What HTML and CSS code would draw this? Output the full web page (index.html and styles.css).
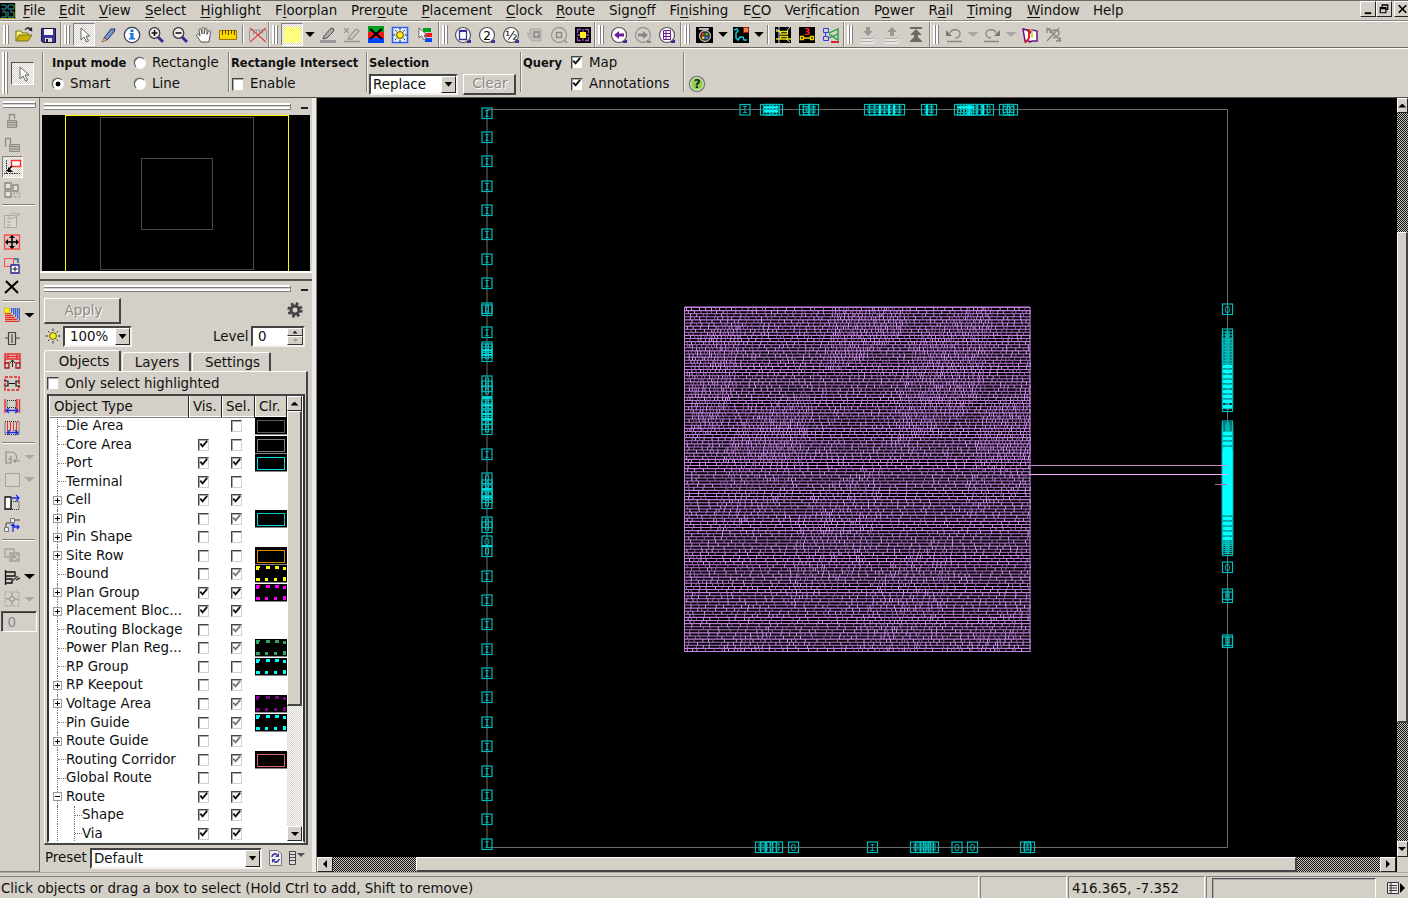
FILE: index.html
```html
<!DOCTYPE html>
<html lang="en">
<head>
<meta charset="utf-8">
<title>Layout Window</title>
<link rel="stylesheet" href="styles.css">
</head>
<body>
<svg class="defs" width="0" height="0">
  <symbol id="logo" viewBox="0 0 16 16"><path fill="#000" d="M0 0h16v16H0z"/><path fill="none" stroke="#20a090" d="M1 2h5v4H1M8 2h6v4H8zM2 9h4v5H1M8 8v6h6V9h-4"/><path stroke="#7040b0" d="M6 4h3M4 6v3M11 6v3"/><path stroke="#c0b040" d="M0 15.500h15.500V0" fill="none"/></symbol>
  <symbol id="open" viewBox="0 0 20 20"><path fill="#fff27a" stroke="#777020" d="M2 16V6h5l1 2h6v3"/><path fill="#c8b400" stroke="#777020" d="M2 16l3-6h13l-4 6z"/><path fill="none" stroke="#222" stroke-width="1.300" d="M11 5c2-3 5-3 6 0M14.500 4.500l3 1 0-3"/></symbol>
  <symbol id="save" viewBox="0 0 20 20"><path fill="#39339a" stroke="#151238" d="M3.500 3.500h14v14H5l-1.500-1.500z"/><path fill="#f4f4f4" d="M6 4h9v6H6z"/><path fill="#ddd" d="M7 13h7v4H7z"/><path fill="#222" d="M8 14h2v3H8z"/></symbol>
  <symbol id="pointer" viewBox="0 0 20 20"><path fill="#fff" stroke="#666" d="M7 3v12l3-3 2.500 5 2-1-2.500-5h4z"/></symbol>
  <symbol id="pencil" viewBox="0 0 20 20"><path fill="#7c96cc" stroke="#223060" d="M6 13L13 4h4l-1 3-7 8z"/><path fill="#f3d795" stroke="#6b4b20" stroke-width=".7" d="M4 17l2-4 3 2z"/></symbol>
  <symbol id="info" viewBox="0 0 20 20"><circle cx="10" cy="10" r="7.700" fill="#fff" stroke="#335" stroke-width="1.200"/><path fill="#1674e0" d="M8.500 4.500h3v2.500h-3zM7.500 8h4v5h1.500v1.500h-6V13h1.500V9.500h-1z"/></symbol>
  <symbol id="lens" viewBox="0 0 20 20"><path stroke="#3a2e98" stroke-width="3" d="M12 12l5 5"/><circle cx="8.500" cy="8" r="5.300" fill="#eee" stroke="#333" stroke-width="1.200"/></symbol>
  <symbol id="zoomin" viewBox="0 0 20 20"><use href="#lens"/><path stroke="#111" stroke-width="1.600" d="M5.500 8h6M8.500 5v6"/></symbol>
  <symbol id="zoomout" viewBox="0 0 20 20"><use href="#lens"/><path stroke="#111" stroke-width="1.600" d="M5.500 8h6"/></symbol>
  <symbol id="hand" viewBox="0 0 20 20"><path fill="#fff" stroke="#555" d="M7 17L2.500 10.500c0-2 2-1.500 3.500.5L5 5c0-2 2-1.500 2.300 0L8 9V3.500c.3-1.600 2-1.500 2.300 0V9L11 4c.5-1.500 2-1 2 .5L13 9.500l1.500-3.500c1-1 2.200-.4 2 1L15 17z"/></symbol>
  <symbol id="ruler" viewBox="0 0 20 20"><path fill="#f8d800" stroke="#9a7800" d="M1.500 5.500h17v9h-17z"/><path stroke="#604000" d="M4.500 5v5M7.500 5v4M10.500 5v5M13.500 5v4M16.500 5v5"/></symbol>
  <symbol id="rulerx" viewBox="0 0 20 20"><path fill="none" stroke="#999" d="M1.500 15V5h17v10M5.500 5v5M8.500 5v4M11.500 5v5M14.500 5v4"/><path stroke="#e04040" stroke-width="1.200" d="M2 3l16 14M18 3L2 17"/></symbol>
  <symbol id="yellow" viewBox="0 0 20 20"><path fill="#ffff7d" d="M2 2h17v16H2z"/></symbol>
  <symbol id="marker" viewBox="0 0 20 20"><path fill="#aaa" stroke="#555" d="M6 11l7-8 3 1-1 3-6 6-4 1z"/><path fill="#999" d="M2 15h16v3H2z"/></symbol>
  <symbol id="markerx" viewBox="0 0 20 20"><path fill="none" stroke="#999" stroke-width="1.300" d="M2 3l5 5M7 3L2 8M7 12l7-8 3 2-7 8H6zM2 16.500h16"/></symbol>
  <symbol id="clearhl" viewBox="0 0 20 20"><path fill="#00a020" d="M2 1h16v6H2z"/><path fill="#f01818" d="M2 7h16v6H2z"/><path fill="#0048ff" d="M2 13h16v5H2z"/><path stroke="#000" stroke-width="2.200" d="M4 4l12 10M16 4L4 14"/></symbol>
  <symbol id="sunbox" viewBox="0 0 20 20"><path fill="#e8ecff" stroke="#2a60ff" stroke-width="1.600" d="M2.500 2.500h15v15h-15z"/><use href="#sun"/></symbol>
  <symbol id="sun" viewBox="0 0 20 20"><path stroke="#333" d="M10 2.500v15M2.500 10h15M5 5l10 10M15 5L5 15"/><circle cx="10" cy="10" r="5" fill="#dcd9d2"/><circle cx="10" cy="10" r="3.400" fill="#ffee20" stroke="#665500"/></symbol>
  <symbol id="selcolor" viewBox="0 0 20 20"><path fill="#00a020" d="M9 3h8v4H9z"/><path fill="#f01818" d="M10 8h8v4h-8z"/><path fill="#0048ff" d="M11 13h7v4h-7z"/><path fill="#fff" stroke="#666" d="M5 3v10l2.500-2.500L10 15l2-1-2-4h3z"/></symbol>
  <symbol id="bigl" viewBox="0 0 20 20"><path fill="#3a2e98" d="M13 14l5 1v3h-4z"/><circle cx="10" cy="10" r="7.500" fill="#fff" stroke="#555" stroke-width="1.200"/></symbol>
  <symbol id="fit" viewBox="0 0 20 20"><use href="#bigl"/><path fill="#fff" stroke="#38309a" stroke-width="1.300" d="M6.500 5.500h7v9h-7z"/><path fill="#38309a" d="M6 5h8v2H6z"/></symbol>
  <symbol id="two" viewBox="0 0 20 20"><use href="#bigl"/><text x="6.300" y="14.500" font-size="12" font-family="DejaVu Sans">2</text></symbol>
  <symbol id="half" viewBox="0 0 20 20"><use href="#bigl"/><text x="4" y="15" font-size="13" font-family="DejaVu Sans">½</text></symbol>
  <symbol id="panoff" viewBox="0 0 20 20"><path fill="#c4c0b8" stroke="#aaa" d="M4 12l-2-4 3 1V4h11v12H7z"/><path fill="none" stroke="#888" stroke-width="1.500" d="M9 7h5v5H9z"/></symbol>
  <symbol id="fitoff" viewBox="0 0 20 20"><circle cx="10" cy="10" r="7.500" fill="#d4d0c8" stroke="#999" stroke-width="1.300"/><path fill="none" stroke="#888" stroke-width="1.500" d="M7.500 7.500h5v5h-5z"/><path stroke="#999" stroke-width="2" d="M15 15l3 3"/></symbol>
  <symbol id="chipsel" viewBox="0 0 20 20"><path fill="#000" d="M2 2h16v16H2z"/><path fill="none" stroke="#9b50c0" stroke-width="1.300" d="M4.500 8V4.500H8M12 4.500h3.500V8M15.500 12v3.500H12M8 15.500H4.500V12M10 4v12M4 10h12"/><path fill="#ffee20" d="M7 7h6v6H7z"/></symbol>
  <symbol id="prev" viewBox="0 0 20 20"><use href="#bigl"/><path fill="#6a1b9a" d="M5 10l5-4v2.500h5v3h-5V14z"/></symbol>
  <symbol id="next" viewBox="0 0 20 20"><circle cx="10" cy="10" r="7.500" fill="#d4d0c8" stroke="#999" stroke-width="1.300"/><path fill="#888" d="M15 10l-5-4v2.500H5v3h5V14zM14 15l4 1v2h-4z"/></symbol>
  <symbol id="viewlist" viewBox="0 0 20 20"><use href="#bigl"/><path fill="#fff" stroke="#6a1b9a" d="M6.500 5.500h7v9h-7zM6 8.500h8M6 11.500h8M9 5v10"/></symbol>
  <symbol id="camera" viewBox="0 0 20 20"><path fill="#000" d="M1 2h17v16H1z"/><circle cx="10" cy="11" r="5.500" fill="#333" stroke="#bbb" stroke-width="1.300"/><path fill="#bbb" d="M4 3h10v2H4z"/><path fill="#f03020" d="M7 8h2.500v2.500H7z"/><path fill="#30c040" d="M10.500 8H13v2.500h-2.500z"/><path fill="#fc0" d="M7 11.500h2.500V14H7z"/><path fill="#28f" d="M10.500 11.500H13V14h-2.500z"/></symbol>
  <symbol id="route" viewBox="0 0 20 20"><path fill="#000" d="M2 2h16v16H2z"/><path fill="none" stroke="#18c8d8" stroke-width="1.500" d="M3 5l3-1 1 2-2 2v5l2 2 2-3h3l1 3h3"/><path fill="#f08040" stroke="#902010" d="M12.500 2.500h5v5h-5z"/></symbol>
  <symbol id="flyline" viewBox="0 0 20 20"><path fill="#000" d="M2 2h16v16H2z"/><path fill="none" stroke="#e8e000" stroke-width="1.300" d="M7.500 6.500h7v2.500h-7zM7.500 11.500h7v2.500h-7zM3 6h4M15 14h3M3 14h4"/><path stroke="#ddd" d="M6 2v16M3 4l5 4M13 7l4-5M13 14l4 3"/></symbol>
  <symbol id="pin3" viewBox="0 0 20 20"><path fill="#000" d="M2 2h16v16H2z"/><text x="7" y="10" font-size="9" font-weight="bold" fill="#f02020" font-family="DejaVu Sans">3</text><path fill="none" stroke="#e8d000" stroke-width="1.400" d="M3.500 11.500h3v3h-3zM13.500 11.500h3v3h-3zM7 13h6"/></symbol>
  <symbol id="hier" viewBox="0 0 20 20"><path fill="none" stroke="#3838e8" d="M2.500 3.500h5v4h-5zM2.500 11.500h5v4h-5zM4.500 8v3"/><path fill="none" stroke="#18a038" stroke-width="1.300" d="M8 8l9-4v11L8 9M8 13l9-4"/><path fill="#e02020" d="M10 16h8v2h-8z"/></symbol>
  <symbol id="pushd" viewBox="0 0 20 20"><path fill="none" stroke="#fff" d="M3 15h12l3-4M3 18h12l3-4"/><path fill="none" stroke="#aaa" d="M3 13.500h12l3-4M3 16.500h12l3-4"/><path fill="#999" d="M8 2h4v4h3l-5 5-5-5h3z"/></symbol>
  <symbol id="pushu" viewBox="0 0 20 20"><path fill="none" stroke="#fff" d="M3 15h12l3-4M3 18h12l3-4"/><path fill="none" stroke="#aaa" d="M3 13.500h12l3-4M3 16.500h12l3-4"/><path fill="#999" d="M8 11h4V7h3l-5-5-5 5h3z"/></symbol>
  <symbol id="top" viewBox="0 0 20 20"><path fill="#6c6a66" d="M4 2h12v2H4zM10 4l6 6H4zM10 10l6 6H4zM4 16h12v1H4zM8 8h4v9H8z"/></symbol>
  <symbol id="undo" viewBox="0 0 20 20"><path fill="none" stroke="#8a8882" stroke-width="1.400" d="M6 8c1-5 11-4 10 1-.5 3-3 4-5 4M3 16.500h15"/><path fill="#777" d="M2 5v6h6z"/></symbol>
  <symbol id="redo" viewBox="0 0 20 20"><path fill="none" stroke="#8a8882" stroke-width="1.400" d="M14 8C13 3 3 4 4 9c.5 3 3 4 5 4M2 16.500h15"/><path fill="#777" d="M18 5v6h-6z"/></symbol>
  <symbol id="book" viewBox="0 0 20 20"><path fill="#fff" stroke="#6a1080" stroke-width="1.500" d="M3 4l4 1 3 3 2-3 5 1v10h-5l-2 1-1-1H5z"/><path fill="none" stroke="#e02020" stroke-width="2" d="M9 4v9l-4 5"/><path stroke="#f0c000" stroke-width="1.500" d="M12 5v8"/></symbol>
  <symbol id="bookx" viewBox="0 0 20 20"><path fill="none" stroke="#8a8882" stroke-width="1.400" d="M3 3l14 13M15 3L3 16M3 8V4h4M6 8c2-4 9-4 9 0s-4 4-6 5M12 16h4v-4"/></symbol>
  <symbol id="help" viewBox="0 0 20 20"><circle cx="10" cy="10" r="7.500" fill="#8ed050" stroke="#777" stroke-width="1.500"/><circle cx="10" cy="10" r="6.300" fill="none" stroke="#e4f4d4"/><text x="6.800" y="14.300" font-size="12" font-weight="bold" font-family="DejaVu Sans" fill="#222">?</text></symbol>

  <symbol id="lock" viewBox="0 0 20 20"><path fill="none" stroke="#908e88" stroke-width="1.300" d="M7.500 10V3.500h5V8"/><path fill="#bbb8b0" stroke="#908e88" d="M5.500 9.500h9v7h-9zM5 11.500h11M5 14h11"/></symbol>
  <symbol id="unlock" viewBox="0 0 20 20"><path fill="none" stroke="#908e88" stroke-width="1.300" d="M3.500 12V3.500h5V9"/><path fill="#bbb8b0" stroke="#908e88" d="M7.500 9.500h10v7h-10zM7 11.500h11M7 14h11"/></symbol>
  <symbol id="snap" viewBox="0 0 20 20"><path fill="#fff" stroke="#ff3030" stroke-width="1.500" d="M9.500 3.500h9v6h-9z"/><path stroke="#222" stroke-dasharray="1.500 1" d="M4.500 3v15M2 16.500h16"/><path stroke="#000" stroke-width="1.500" d="M5 14l5-5"/><path d="M6 10v5h5z"/></symbol>
  <symbol id="blocks" viewBox="0 0 20 20"><path fill="#e4e2dc" stroke="#888680" stroke-width="1.300" d="M3 3h6v6H3zM11 5h5v6h-5zM3 11h6v6H3z"/><path fill="none" stroke="#888680" stroke-dasharray="1 1" d="M12 13h6v4h-6z"/></symbol>
  <symbol id="props" viewBox="0 0 20 20"><path fill="#d9d7d0" stroke="#aaa8a2" d="M2.500 5.500h12v12h-12zM5 12h4M5 15h4M5 9l6-6 7 1-6 4z"/></symbol>
  <symbol id="move" viewBox="0 0 20 20"><path fill="#ddbfba" stroke="#ff4a4a" stroke-width="1.300" d="M2.500 3h15v14h-15z"/><path stroke="#000" stroke-width="1.500" d="M10 5v10M5 10h10"/><path d="M10 3l3 3H7zM10 17l3-3H7zM3 10l3-3v6zM17 10l-3-3v6z"/></symbol>
  <symbol id="copy" viewBox="0 0 20 20"><path fill="none" stroke="#ff4a4a" d="M2.500 3.500h9v8h-9z"/><path fill="#fff" stroke="#202090" stroke-width="1.300" d="M9 10h8v8H9z"/><path stroke="#111" d="M13 11.500v5M10.500 14h5"/><path fill="none" stroke="#306090" stroke-width="1.500" d="M12 4h4v4"/></symbol>
  <symbol id="del" viewBox="0 0 20 20"><path stroke="#000" stroke-width="2" d="M4 4l12 12M16 4L3 16"/></symbol>
  <symbol id="hatch" viewBox="0 0 20 20"><path fill="#9aa6d0" d="M8 3h10v14z"/><path fill="#e89a88" d="M3 8h5l10 9H3z"/><path stroke="#3860d0" d="M9.500 3v5M11.500 3v7M13.500 3v9M15.500 3v11M17.500 3v13"/><path stroke="#e03020" d="M3 8.500h6M3 10.500h8M3 12.500h10M3 14.500h12M3 16.500h14"/><path fill="#ffee00" stroke="#c0b000" stroke-width=".6" d="M2.500 3h5v5h-5z"/></symbol>
  <symbol id="stretch" viewBox="0 0 20 20"><path fill="none" stroke="#444" stroke-width="1.200" d="M6.500 4.500h7v12h-7zM10 6v9M3 10h4M13 10h5"/></symbol>
  <symbol id="redA" viewBox="0 0 20 20"><path fill="none" stroke="#e83030" stroke-width="1.500" d="M3 3h15v5H3zM3 8v5M18 8v5M6 3v5M15 3v5M3 5.500h15"/><path fill="#d4d0c8" stroke="#a01818" stroke-width="1.300" d="M3 12h4v5H3zM14 12h4v5h-4z"/><path fill="none" stroke="#222" d="M10.500 16V9M8 12l2.500-3 2.500 3"/></symbol>
  <symbol id="redB" viewBox="0 0 20 20"><path fill="none" stroke="#e81818" stroke-width="1.500" stroke-dasharray="3 1.500" d="M3 4h14v13H3z"/><path fill="none" stroke="#111" stroke-width="1.200" d="M2 8h4v5H2M18 8h-4v5h4M7 10.500h6"/></symbol>
  <symbol id="redC" viewBox="0 0 20 20"><path stroke="#e83030" stroke-width="1.400" d="M3 3v14M15 3v14M17.500 3v14"/><path fill="none" stroke="#222" stroke-dasharray="1 1" d="M5 4.500h9v7H5z"/><path fill="none" stroke="#2030e0" stroke-width="1.300" d="M4 14.500h12M7 12l-3 2.500L7 17M13 12l3 2.500-3 2.500"/></symbol>
  <symbol id="redD" viewBox="0 0 20 20"><path fill="none" stroke="#222" stroke-dasharray="1 1" d="M3 3.500h14v13H3z"/><path stroke="#e83030" d="M5.500 4v9M8.500 4v9M11.500 4v9M14.500 4v9"/><path fill="none" stroke="#2030e0" stroke-width="1.300" d="M5 14.500h11M8 12l-3 2.500L8 17M13 12l3 2.500-3 2.500"/></symbol>
  <symbol id="rot" viewBox="0 0 20 20"><path fill="none" stroke="#908e88" stroke-width="1.200" d="M4 16V5h5c5 0 6 3 6 8M3 16h6V9M6 12h3M11 14h7M13 12v4"/></symbol>
  <symbol id="sq" viewBox="0 0 20 20"><path fill="#d8d4cc" stroke="#a4a29c" d="M3.500 3.500h14v13h-14z"/></symbol>
  <symbol id="expand" viewBox="0 0 20 20"><path fill="#fff" stroke="#111" stroke-width="1.300" d="M3 4h6v12H3z"/><path fill="none" stroke="#222" stroke-dasharray="1 1" d="M9 8.500h8v8H9z"/><path fill="none" stroke="#2030e0" stroke-width="1.300" d="M10 5h7M14 2l3 3-3 3"/></symbol>
  <symbol id="conn" viewBox="0 0 20 20"><path fill="#eee" stroke="#777" d="M2.500 12.500h4v4h-4zM8.500 3.500h4v4h-4z"/><path fill="none" stroke="#444" d="M4 12V8h5M13 5h5"/><path fill="none" stroke="#2030e0" stroke-width="1.300" d="M11 17V9M9 11l2-2 2 2M11 12h6M15 10l2 2-2 2"/></symbol>
  <symbol id="overlap" viewBox="0 0 20 20"><path fill="none" stroke="#a4a29c" stroke-width="1.300" d="M3 4h9v8H3zM8 8h9v8H8zM8 8l9 8M17 8l-9 8"/></symbol>
  <symbol id="align" viewBox="0 0 20 20"><path fill="none" stroke="#111" stroke-width="1.300" d="M3.500 3v15M4 5h9v4H4M4 12h6v4H4"/><path fill="none" stroke="#444" stroke-width="1.500" d="M10 14l6-5M14 13l4-2"/></symbol>
  <symbol id="spread" viewBox="0 0 20 20"><path fill="none" stroke="#999690" stroke-dasharray="2 1.500" d="M3 3h14v14H3z"/><path fill="#ddd" stroke="#888" d="M8 8h4v4H8zM10 4v3M10 13v3M4 10h3M13 10h3"/></symbol>
  <symbol id="gear" viewBox="0 0 20 20"><circle cx="10" cy="10" r="6.200" fill="none" stroke="#444" stroke-width="3" stroke-dasharray="2.600 2.270"/><circle cx="10" cy="10" r="4" fill="none" stroke="#444" stroke-width="3"/></symbol>
  <symbol id="reload" viewBox="0 0 20 20"><path fill="#eee" stroke="#777" d="M4.500 2.500h8l4 3v12h-12z"/><path fill="none" stroke="#483a98" stroke-width="1.600" d="M7 9c0-3 4-4 5-2M14 11c0 3-4 4-5 2"/><path fill="#483a98" d="M14 5v4h-4zM7 15v-4h4z"/></symbol>
  <symbol id="listmenu" viewBox="0 0 20 20"><path fill="#ddd" stroke="#444" d="M2.500 3.500h6v13h-6zM3 6.500h5M3 9.500h5M3 12.500h5"/><path fill="#555" d="M10 5h8l-4 4z"/></symbol>
  <symbol id="panelout" viewBox="0 0 20 20"><path fill="#eee" stroke="#333" d="M1.500 4.500h11v11h-11zM3 7.500h8M3 10h8M3 12.500h8M5 5v10"/><path d="M14 5v10l5-5z"/></symbol>
  <symbol id="tick" viewBox="0 0 12 12"><path fill="none" stroke="currentColor" stroke-width="2" d="M2.500 5l2.500 3 5-6"/></symbol>
</svg>

<div class="app">
  <nav class="menubar">
    <svg class="logo"><use href="#logo"/></svg>
    <span><u>F</u>ile</span><span><u>E</u>dit</span><span><u>V</u>iew</span><span><u>S</u>elect</span><span><u>H</u>ighlight</span><span>F<u>l</u>oorplan</span><span>Prer<u>o</u>ute</span><span><u>P</u>lacement</span><span><u>C</u>lock</span><span><u>R</u>oute</span><span>Sign<u>o</u>ff</span><span>Fi<u>n</u>ishing</span><span>E<u>C</u>O</span><span>Ver<u>i</u>fication</span><span>P<u>o</u>wer</span><span>R<u>a</u>il</span><span><u>T</u>iming</span><span><u>W</u>indow</span><span>Help</span>
    <div class="winbtns">
      <svg class="winbtn" viewBox="0 0 15 15"><path d="M4 11h7v2H4z"/></svg>
      <svg class="winbtn" viewBox="0 0 15 15"><path fill="none" stroke="#000" stroke-width="1.300" d="M5.500 5V3h6v5h-2M3.500 6h6v5.500h-6zM3.500 7h6M5.500 3.500h6"/></svg>
      <svg class="winbtn last" viewBox="0 0 15 15"><path stroke="#000" stroke-width="1.800" d="M3.500 3.500l8 8M11.500 3.500l-8 8"/></svg>
    </div>
  </nav>

  <div class="toolbar" id="toolbar"></div>

  <div class="options">
    <i class="grip tall"></i>
    <span class="modebtn pressed"><svg><use href="#pointer"/></svg></span>
    <div class="opt mode">
      <b>Input mode</b><label><i class="radio"></i>Rectangle</label>
      <label><i class="radio on"></i>Smart</label><label><i class="radio"></i>Line</label>
    </div>
    <div class="opt rect"><b>Rectangle Intersect</b><label><i class="check big"></i>Enable</label></div>
    <div class="opt sel"><b>Selection</b>
      <div class="line"><div class="combo replace"><span>Replace</span><i class="drop"></i></div><button class="btn clear">Clear</button></div>
    </div>
    <div class="opt query"><b>Query</b><label><i class="check big"><svg><use href="#tick"/></svg></i>Map</label><span></span><label><i class="check big"><svg><use href="#tick"/></svg></i>Annotations</label></div>
    <div class="opt helpbox"><span></span><svg><use href="#help"/></svg></div>
  </div>

  <div class="main">
    <aside class="strip" id="strip"><i class="hgrip"></i></aside>
    <section class="dock">
      <div class="dockhead"><i class="hgrip"></i><i class="min"></i></div>
      <svg class="overview" viewBox="0 0 268 156" shape-rendering="crispEdges"><path fill="none" stroke="#484848" d="M58.500 2.500h153v152h-153zM99.500 43.500h71v71h-71z"/><path fill="#ffff00" d="M23 0h224v1H23zM246 0h1v156h-1zM23 0h1v156h-1z"/></svg>
      <div class="split"></div>
      <div class="dockhead second"><i class="hgrip"></i><i class="min"></i></div>
      <div class="applyrow"><button class="btn apply">Apply</button><svg><use href="#gear"/></svg></div>
      <div class="levelrow">
        <svg><use href="#sun"/></svg>
        <div class="combo pct"><span>100%</span><i class="drop"></i></div>
        <span class="lvl">Level</span>
        <div class="combo spin"><span>0</span><span class="spins"><i class="up"></i><i class="dn"></i></span></div>
      </div>
      <div class="tabs"><span class="tab on">Objects</span><span class="tab">Layers</span><span class="tab">Settings</span></div>
      <div class="panel">
        <label class="only"><i class="check big"></i>Only select highlighted</label>
        <div class="tree">
          <div class="treemain">
            <div class="thead"><span>Object Type</span><span>Vis.</span><span>Sel.</span><span>Clr.</span></div>
            <div class="rows" id="objectRows"></div>
          </div>
          <div class="vscroll"><i class="sb up"></i><i class="thumb"></i><i class="space"></i><i class="sb down"></i></div>
        </div>
      </div>
      <div class="preset"><span>Preset</span><div class="combo def"><span>Default</span><i class="drop"></i></div><svg><use href="#reload"/></svg><svg><use href="#listmenu"/></svg></div>
    </section>
    <section class="view">
      <svg id="layout" class="layout" viewBox="317 98 1079 759"></svg>
      <div class="vbar"><i class="sb up"></i><i class="a"></i><i class="thumb"></i><i class="b"></i><i class="sb down"></i></div>
      <div class="hbar"><i class="sb left"></i><i class="a"></i><i class="thumb"></i><i class="b"></i><i class="sb right"></i></div>
      <div class="corner"></div>
    </section>
  </div>

  <footer class="status">
    <span class="cell msg">Click objects or drag a box to select (Hold Ctrl to add, Shift to remove)</span>
    <span class="cell"></span>
    <span class="cell">416.365, -7.352</span>
    <span class="cell last"><i class="progress"></i><svg><use href="#panelout"/></svg></span>
  </footer>
</div>
<script src="app.js"></script>
</body>
</html>
```

FILE: styles.css
```css
* { box-sizing: border-box; }
body { margin: 0; background: #d4d0c8; color: #101010; font: 13.4px/18px "DejaVu Sans", sans-serif; overflow: hidden; white-space: nowrap; }
i { display: block; font-style: normal; flex: none; }
u { text-decoration: underline; text-underline-offset: 2px; }
svg { display: block; width: 20px; height: 20px; flex: none; }
.defs { display: none; }
.app { width: 1408px; height: 898px; display: grid; grid-template-rows: 21px 27px 50px 774px 26px; background: #d4d0c8; }

.menubar { display: grid; grid-template-columns: 23px 36px 40px 46px 55.500px 74.500px 76px 70.500px 84.500px 50px 53px 60.500px 73.500px 41.500px 89.500px 54.500px 38.500px 60px 66px 267px 48px; border-top: 1px solid #6c6a66; border-bottom: 1px solid #86847e; line-height: 19px; height: 21px; }
.logo { width: 16px; height: 16px; margin-top: 2px; }
.winbtns { display: flex; }
.winbtn { width: 16px; height: 16px; border: 1px solid #fff; border-right: 1px solid #222; border-bottom: 1px solid #222; background: #d4d0c8; }
.winbtn.last { margin-left: 2px; border-right: 0; }

.toolbar { display: flex; border-top: 1px solid #fff; border-bottom: 1px solid #6c6a66; height: 27px; }
.group { display: flex; align-items: center; border-right: 1px solid #86847e; box-shadow: 1px 0 #f4f2ee; height: 25px; }
.group:last-child { border: 0; box-shadow: none; }
.grip { width: 5px; height: 19px; border-left: 2px solid #fff; border-right: 2px solid #fff; box-shadow: 1px 0 #808080, inset 1px 0 #808080; margin-left: 3px; margin-right: 4px; }
.grip.tall { height: 42px; margin-left: 2px; }
.tool { width: 24px; height: 24px; display: flex; align-items: center; justify-content: center; flex: none; }
.tool.narrow { width: 22px; height: 23px; margin-right: 1px; }
.pressed { border: 1px solid #808080; border-right-color: #fff; border-bottom-color: #fff; background: repeating-conic-gradient(#fff 0 25%, #d4d0c8 0 50%) 0 0 / 2px 2px; }
.dd { width: 12px; height: 5px; background: #000; clip-path: polygon(10% 0, 90% 0, 50% 100%); }
.dd.wide { width: 14px; }
.dd.off { background: #aaa8a4; }
.vsep { width: 2px; height: 19px; border-left: 1px solid #808080; border-right: 1px solid #fff; margin: 0 2px; }

.options { display: flex; border-top: 1px solid #fff; border-bottom: 1px solid #55534e; height: 50px; padding-top: 3px; }
.modebtn { width: 23px; height: 23px; margin: 10px 8px 0 0; display: flex; align-items: center; justify-content: center; border-color: #555 #fff #fff #555; }
.opt { display: grid; grid-template-rows: 21.500px 21.500px; align-items: center; height: 40px; border-left: 1px solid #808080; box-shadow: inset 1px 0 #eee; }
.opt label { display: flex; align-items: center; }
.opt b { font-size: 11.500px; }
.mode { width: 186px; grid-template-columns: 82px 1fr; padding-left: 9px; }
.rect { width: 138px; padding-left: 2px; }
.rect label { padding-left: 1px; }
.sel { width: 154px; padding-left: 2px; }
.query { width: 163px; grid-template-columns: 48px 1fr; padding-left: 2px; }
.helpbox { padding-left: 3px; }
.options .grip.tall { margin-right: 4px; }
.radio { width: 12px; height: 12px; border-radius: 50%; background: #fff; border: 1px solid #555; border-right-color: #f8f8f8; border-bottom-color: #f8f8f8; margin-right: 6px; box-shadow: -1px -1px 0 -0.500px #999; }
.radio.on { background: radial-gradient(#000 0 2.200px, #fff 2.700px); }
.check { width: 11px; height: 12px; background: #fff; border: 1px solid #444; border-right-color: #d4d0c8; border-bottom-color: #d4d0c8; box-shadow: inset 1px 1px #aaa; }
.check svg { width: 11px; height: 11px; margin: -1px 0 0 -1px; }
.check.big { width: 12px; height: 13px; margin-right: 6px; }
.line { display: flex; align-items: center; }
.combo { display: flex; background: #fff; border: 2px solid #333; border-color: #444 #f4f2ee #f4f2ee #444; height: 21px; line-height: 17px; }
.combo > span:first-child { flex: 1; padding-left: 3px; }
.drop { width: 15px; height: 17px; background: #d4d0c8; border: 1px solid #fff; border-right-color: #222; border-bottom-color: #222; display: flex; align-items: center; justify-content: center; }
.drop::before { content: ""; width: 8px; height: 5px; background: #000; clip-path: polygon(0 0, 100% 0, 50% 100%); }
.replace { width: 89px; margin-right: 5px; }
.replace > span:first-child { padding-left: 2px; }
.btn { font: inherit; color: #8c8a86; text-shadow: 1px 1px #fff; background: #d4d0c8; border: 1px solid #fff; border-right: 2px solid #444; border-bottom: 2px solid #444; padding: 0; }
.clear { width: 53px; height: 21px; line-height: 17px; padding-left: 2px; }

.main { display: grid; grid-template-columns: 40px 277px 1091px; height: 774px; }
.strip { border-right: 1px solid #6c6a66; border-bottom: 1px solid #808080; display: flex; flex-direction: column; padding-left: 1.500px; }
.hgrip { height: 6px; border-top: 2px solid #fff; border-bottom: 2px solid #fff; box-shadow: 0 1px #808080, inset 0 1px #808080, 1px 1px #808080; }
.strip .hgrip { width: 32px; margin: 3px 0 2px 1px; flex: none; }
.srow { display: flex; align-items: center; flex: none; }
.srow .pressed { margin-top: -1px; }
.srow .tool { width: 21px; height: 22px; }
.srow .dd { width: 14px; }
.hsep { height: 2px; width: 33px; border-top: 1px solid #808080; border-bottom: 1px solid #fff; flex: none; }
.zero { width: 36px; height: 21px; border: 1px solid #555; border-right-color: #fff; border-bottom-color: #fff; box-shadow: inset 1px 1px #333; color: #888; padding: 2px 0 0 6px; margin: 1px 0 0 -1px; flex: none; }

.dock { display: flex; flex-direction: column; padding-left: 2px; border-right: 1px solid #86847e; box-shadow: inset -4px 0 #efede8; }
.dockhead { height: 17px; display: flex; padding: 5px 0 0 2px; flex: none; }
.dockhead .hgrip { width: 246px; }
.min { width: 7px; height: 2px; background: #222; margin: 4px 0 0 11px; }
.overview { width: 268px; height: 156px; background: #000; }
.split { height: 10px; border-bottom: 2px solid #55534e; border-top: 2px solid #fff; margin-right: 4px; margin-left: -2px; flex: none; }
.dockhead.second { height: 17px; padding-top: 4px; }
.applyrow { display: flex; justify-content: space-between; padding: 0 11px 0 2px; height: 29px; align-items: flex-start; flex: none; }
.apply { width: 77px; height: 26px; padding-left: 3px; }
.applyrow svg { width: 20px; height: 20px; margin: 2px 0 0; }
.levelrow { display: flex; height: 23px; flex: none; align-items: flex-start; line-height: 20px; }
.levelrow svg { margin: -1px -1px 0 1px; }
.levelrow .combo { margin-top: -1px; line-height: 18px; }
.pct { width: 69px; margin-left: 1px; }
.pct > span:first-child { padding-left: 5px; }
.lvl { margin: 0 4px 0 81px; width: 34px; }
.spin { width: 54px; }
.spin > span:first-child { padding-left: 5px; }
.spins { width: 16px; background: #d4d0c8; display: grid; grid-template-rows: 8px 9px; }
.spins i { border: 1px solid #fff; border-right-color: #333; border-bottom-color: #333; display: flex; align-items: center; justify-content: center; }
.spins i::before { content: ""; width: 5px; height: 3px; background: #222; clip-path: polygon(50% 0, 100% 100%, 0 100%); }
.spins .dn::before { background: #999; transform: rotate(180deg); }
.tabs { display: flex; height: 21px; align-items: flex-end; padding-left: 2px; flex: none; }
.tab { height: 19px; line-height: 19px; border-top: 1px solid #fff; border-left: 1px solid #fff; border-right: 2px solid #444; border-radius: 3px 2px 0 0; width: 69px; margin-left: 1px; text-align: center; padding-left: 2px; }
.tab.on { width: 77px; height: 21px; margin-left: 0; line-height: 21px; padding-left: 4px; }
.tab:last-child { width: 79px; padding-left: 3px; }
.panel { width: 264px; margin: 0 9px 0 2px; border-top: 1px solid #fff; border-left: 1px solid #fff; border-right: 2px solid #444; border-bottom: 2px solid #444; height: 474px; padding: 1px 1px 0 2px; flex: none; }
.only { display: flex; align-items: center; height: 21px; }
.tree { display: grid; grid-template-columns: 238px 15px; height: 449px; width: 258px; border: 2px solid #222; border-color: #444 #333 #fff #333; background: #fff; }
.treemain { height: 445px; overflow: hidden; width: 238px; }
.thead { display: grid; grid-template-columns: 140px 33px 33px 32px; height: 20px; background: #d4d0c8; margin-bottom: 1px; }
.thead span { border-left: 1px solid #fff; border-right: 1px solid #222; border-bottom: 1px solid #808080; padding-left: 3px; line-height: 21px; }
.thead span:first-child { padding-left: 4px; }
.rows { overflow: hidden; }
.row { height: 18.520px; display: grid; grid-template-columns: 9px 8px 132px 33px 24px 32px; align-items: center; line-height: 18px; }
.row .vis { grid-column: 4; }
.row .selc { grid-column: 5; }
.row .sw { grid-column: 6; }
.row .gray { color: #777; }
.guide { align-self: stretch; border-right: 1px dotted #777; }
.twig { border-top: 1px dotted #777; height: 1px; }
.box { width: 9px; height: 9px; margin-left: -5px; background: #fff; border: 1px solid #999; display: grid; place-items: center; position: relative; z-index: 1; }
.box::before { content: ""; width: 5px; height: 1px; background: #000; grid-area: 1/1; }
.box.plus::after { content: ""; width: 1px; height: 5px; background: #000; grid-area: 1/1; }
.row.child { grid-template-columns: 9px 17px 7px 116px 33px 24px 32px; }
.row.child .vis { grid-column: 5; }
.row.child .selc { grid-column: 6; }
.swatch { width: 32px; height: 18px; background: #000; padding: 3px 2px 1px; border-bottom: 1px solid #888; }
.swatch b { display: block; height: 13px; width: 28px; border: 1px solid; }
.swatch.dots { padding: 0 1px; }
.swatch svg { width: 30px; height: 17px; }
.vscroll { display: grid; grid-template-rows: 15px 295px 1fr 15px; height: 445px; }
.sb { background: #d4d0c8; border: 1px solid #fff; border-right: 1px solid #222; border-bottom: 1px solid #222; display: flex; align-items: center; justify-content: center; }
.sb::before { content: ""; width: 8px; height: 4px; background: #000; clip-path: polygon(50% 0, 100% 100%, 0 100%); }
.sb.down::before { transform: rotate(180deg); }
.sb.left::before { transform: rotate(-90deg); }
.sb.right::before { transform: rotate(90deg); }
.thumb { background: #d4d0c8; border: 1px solid #fff; border-right: 2px solid #444; border-bottom: 2px solid #444; }
.space { background: repeating-conic-gradient(#fff 0 25%, #d4d0c8 0 50%) 0 0 / 2px 2px; }
.preset { display: flex; align-items: center; height: 24px; padding: 2px 0 0 3px; flex: none; }
.preset > span { width: 45px; }
.def { width: 172px; }
.def > span:first-child { padding-left: 2px; }
.preset svg { margin-left: 2px; width: 20px; }
.preset .combo + svg { margin-left: 3px; }

.view { display: grid; grid-template-columns: 1079.500px 11.500px; grid-template-rows: 758.500px 15.500px; background: #000; height: 774px; }
.layout { width: 1079px; height: 759px; background: #000; }
.vbar { display: grid; grid-template-rows: 15px 119px 491px 118px 15.500px; }
.hbar { display: grid; grid-template-columns: 16px 83px 881px 83px 16px; }
.view .a, .view .b { background: repeating-conic-gradient(#c8c4bc 0 25%, #101010 0 50%) 0 0 / 2px 2px; }
.corner { background: #d4d0c8; }

.status { display: grid; grid-template-columns: 979px 87px 137px 205px; padding-top: 3px; border-top: 1px solid #aaa8a2; gap: 1px; }
.cell { height: 22px; line-height: 23px; border: 1px solid #808080; border-right: 1px solid #fff; border-bottom: 0; padding-left: 3px; }
.cell.msg { border-left: 0; padding-left: 1px; }
.cell.last { display: flex; padding-left: 5px; }
.progress { width: 164px; height: 20px; border: 1px solid #555; border-right-color: #fff; border-bottom: 0; margin-top: 1px; box-shadow: inset 1px 1px #aaa; }
.cell.last svg { margin: 1px 0 0 10px; }
.port { fill: none; stroke: #00bcbc; stroke-width: 1.2; }
.tight { fill: none; stroke: #00b8b8; }
.pname { fill: #00b8b8; font: 10px "Liberation Mono", monospace; text-anchor: middle; }
```

FILE: app.js
```javascript
const icon = id => `<svg><use href="#${id}"/></svg>`;
const tool = id => `<span class="tool">${icon(id)}</span>`;

// Main toolbar: each group is [width, ...items]
const groups = [
  [61, 'open', 'save'],
  [208, '!pointer', 'pencil', 'info', 'zoomin', 'zoomout', 'hand', 'ruler', '|', 'rulerx'],
  [170, '!yellow', 'v', 'marker', 'markerx', 'clearhl', 'sunbox', 'selcolor'],
  [156, 'fit', 'two', 'half', 'panoff', 'fitoff', 'chipsel'],
  [86, 'prev', 'next', 'viewlist'],
  [163, 'camera', 'v', 'route', 'v', '|', 'flyline', 'pin3', 'hier'],
  [86, 'pushd', 'pushu', 'top'],
  [478, 'undo', 'x', 'redo', 'x', 'book', 'bookx']
];
document.getElementById('toolbar').innerHTML = groups.map(([w, ...items]) =>
  `<div class="group" style="width:${w}px"><i class="grip"></i>` + items.map(t =>
    t === '|' ? '<i class="vsep"></i>' :
    t === 'v' ? '<i class="dd"></i>' :
    t === 'x' ? '<i class="dd wide off"></i>' :
    t[0] === '!' ? `<span class="tool narrow pressed">${icon(t.slice(1))}</span>` : tool(t)).join('') + '</div>').join('');

// Edit strip: [height, icon, pressed/dropdown flag]
const strip = [
  [24, 'lock'], [23, 'unlock'], [23, 'snap', 'p'], [22, 'blocks'], [7, '-'],
  [23, 'props'], [22, 'move'], [23, 'copy'], [22, 'del'], [6, '-'],
  [22, 'hatch', 'v'], [23, 'stretch'], [23, 'redA'], [22, 'redB'], [23, 'redC'], [22, 'redD'], [7, '-'],
  [22, 'rot', 'x'], [23, 'sq', 'x'], [23, 'expand'], [22, 'conn'], [8, '-'],
  [21, 'overlap'], [23, 'align', 'v'], [22, 'spread', 'x']
];
document.getElementById('strip').innerHTML += strip.map(([h, id, f]) =>
  `<div class="srow" style="height:${h}px">` + (id === '-' ? '<i class="hsep"></i>' :
    `<span class="tool ${f === 'p' ? 'pressed' : ''}">${icon(id)}</span>` +
    (f === 'v' ? '<i class="dd"></i>' : f === 'x' ? '<i class="dd off"></i>' : '')) + '</div>').join('') +
  '<div class="zero">0</div>';

// Object tree: name, node kind, vis, sel (n none, 0 off, 1 on, 2 partial), swatch
const objects = [
  ['Die Area', '.', 'n', 0, '#5c5c5c'], ['Core Area', '.', 1, 0, '#808080'], ['Port', '.', 1, 1, '#00e4e4'],
  ['Terminal', '.', 1, 0], ['Cell', '+', 1, 1], ['Pin', '+', 0, 2, '#00d0d0'], ['Pin Shape', '+', 0, 0],
  ['Site Row', '+', 0, 0, '#e08800'], ['Bound', '.', 0, 2, '*#ffff00'], ['Plan Group', '+', 1, 1, '*#ff00ff'],
  ['Placement Bloc...', '+', 1, 1], ['Routing Blockage', '.', 0, 2], ['Power Plan Reg...', '.', 0, 2, '*#30a860'],
  ['RP Group', '.', 0, 0, '*#00ffff'], ['RP Keepout', '+', 0, 2], ['Voltage Area', '+', 0, 2, '*#800090'],
  ['Pin Guide', '.', 0, 2, '*#00ffff'], ['Route Guide', '+', 0, 2], ['Routing Corridor', '.', 0, 2, '#d86464'],
  ['Global Route', '.', 0, 0], ['Route', '-', 1, 1], ['Shape', 'c', 1, 1], ['Via', 'c', 1, 1]
];
const check = (v, cls) => v === 'n' ? '' :
  `<i class="check ${cls} ${v === 2 ? 'gray' : ''}">${v ? icon('tick') : ''}</i>`;
const swatch = s => !s ? '' : s[0] === '*'
  ? `<i class="sw swatch dots"><svg viewBox="0 0 30 17"><path fill="${s.slice(1)}" d="M0 1h4v2H3v2H0zM10 1h4v3h-4zM19 1h4v3h-4zM27 2h3v3h-3zM0 13h4v3H0zM9 13h3v3H9zM18 13h3v3h-3zM27 12h3v4h-3z"/></svg></i>`
  : `<i class="sw swatch"><b style="border-color:${s}"></b></i>`;
document.getElementById('objectRows').innerHTML = objects.map(([n, k, v, s, c]) =>
  `<div class="row ${k === 'c' ? 'child' : ''}"><i class="guide"></i>` +
  (k === 'c' ? '<i class="guide"></i><i class="twig"></i>' :
    k === '.' ? '<i class="twig"></i>' : `<i class="box ${k === '+' ? 'plus' : ''}"></i>`) +
  `<span>${n}</span>${check(v, 'vis')}${check(s, 'selc')}${swatch(c)}</div>`).join('');

// Chip layout
let seed = 11;
const rnd = () => (seed = (seed * 16807) % 2147483647) / 2147483647;
let out = '<path fill="none" stroke="#6c6c6c" d="M487 109.500H1227.500V847.500H487z"/>';

// Standard-cell rows
const X0 = 684.5, X1 = 1030.5, Y0 = 307.5, Y1 = 651.5, N = 111, pitch = (Y1 - Y0) / N;
let rowLines = '', dim = '', lit = '';
for (let r = 0; r <= N; r++) {
  const y = Y0 + r * pitch;
  rowLines += `M${X0} ${y.toFixed(2)}H${X1}`;
  if (r === N) break;
  const upper = r < 50;
  let x = X0 + 2 + rnd() * 6;
  while (x < X1) {
    const seg = `M${x.toFixed(1)} ${y.toFixed(2)}v${pitch.toFixed(2)}`;
    if (rnd() < .5) lit += seg; else dim += seg;
    const dense = Math.sin(x / 19 + r / 9) + Math.sin(x / 43 - r / 14) > .1;
    x += upper ? (dense ? 1.8 + rnd() * 3 : 3 + rnd() * 6) : (dense ? 2 + rnd() * 6 : 4 + rnd() * 8);
  }
}
out += `<path stroke="#c080de" stroke-width="1.08" d="${rowLines}"/><path stroke="#9462ac" d="${dim}"/><path stroke="#d592f6" d="${lit}"/>`;
out += `<path fill="none" stroke="#c485df" d="M684.500 307V651.500H1030V307z"/>`;

// Ports along the die edge; tightly packed ones carry no legible name
const box = (x, y) => `<rect class="port" x="${x - 5}" y="${y - 5}" width="10" height="10.500"/>`;
const port = (x, y, c) => box(x, y) + `<text class="pname" x="${x}" y="${y + 3.5}">${c}</text>`;
const tight = (x, y) => box(x, y) + `<rect class="tight" x="${x - 1.5}" y="${y - 3}" width="3" height="6"/>`;
const busy = [308, 357, 381, 405, 430, 478, 503, 527, 551];
for (let i = 0; i <= 30; i++) {
  const y = Math.round(112.6 + i * 24.37);
  out += busy.some(b => Math.abs(b - y) < 3) ? tight(487, y) : port(487, y, 'I');
}
[310, 347, 349, 352, 386, 391, 403, 408, 411, 415, 419, 424, 485, 490, 494, 497, 522].forEach(y => out += tight(487, y));
out += port(487, 541, 'O');
out += '<path stroke="#00f0f0" stroke-width="1.5" d="M482 350h10M482 355h10M482 398h10M482 405h10M482 414h10M482 419h10M482 489h10M482 497h10M482 546h10"/>';
const range = (a, b, s) => { const l = []; for (let v = a; v <= b; v += s) l.push(v); return l; };
[309, 567].forEach(y => out += port(1227.5, y, 'O'));
[...range(334, 407, 3), ...range(426, 551, 2), 594, 597, 640, 642].forEach(y => out += tight(1227.5, y));
out += '<path stroke="#00ffff" stroke-width="10" d="M1227.500 450V515"/><path stroke="#00ffff" stroke-width="9" stroke-dasharray="3 2" d="M1227.500 365V408M1227.500 432V540"/>';
[765, 768, 771, 774, 777, 804, 808, 813, 869, 874, 879, 884, 889, 894, 899, 926, 931, 959, 962, 965, 968, 971, 976, 982, 988, 1004, 1008, 1012].forEach(x => out += tight(x + .5, 109.5));
out += port(745, 109.5, 'I');
[760, 765, 771, 777, 915, 920, 925, 928, 933, 1025, 1029].forEach(x => out += tight(x + .5, 847));
out += port(793.5, 847, 'O') + port(872.5, 847, 'I') + port(957, 847, 'O') + port(972.5, 847, 'O');
out += '<path stroke="#00ffff" stroke-width="2" d="M764 107.500h14M764 111h14M958 107.500h16"/><path stroke="#00ffff" stroke-width="1.5" d="M880 105v10M889 105v10M894 105v10M927 105v10M969 105v10M983 105v10"/>';
// Highlighted nets
out += '<path stroke="#c888cc" d="M978 465.500h249"/><path stroke="#ffa8ff" d="M1030 474.500h197"/><path stroke="#a868b0" d="M1215 484.500h12"/>';
document.getElementById('layout').innerHTML = out;
```
